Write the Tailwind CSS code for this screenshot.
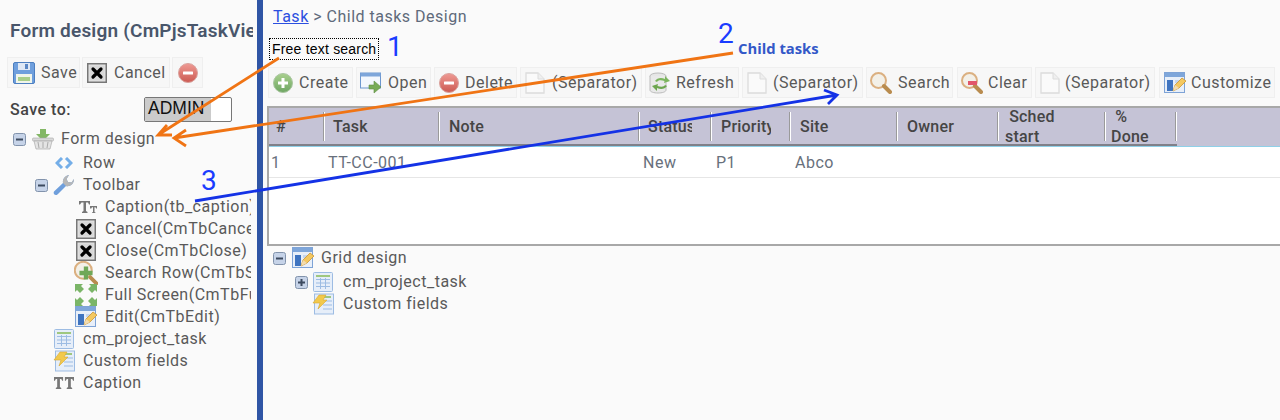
<!DOCTYPE html>
<html lang="en"><head><meta charset="utf-8"><title>Form design</title>
<script src="https://cdn.jsdelivr.net/npm/@tailwindcss/browser@4"></script></head>
<body class="m-0">
<svg width="0" height="0" class="absolute">
<defs>
<linearGradient id="g" x1="0" y1="0" x2="0" y2="1"><stop offset="0" stop-color="#a9d08e"/><stop offset="1" stop-color="#6ea663"/></linearGradient>
<linearGradient id="r" x1="0" y1="0" x2="0" y2="1"><stop offset="0" stop-color="#ef9a94"/><stop offset="1" stop-color="#cc5a52"/></linearGradient>
<symbol id="save" viewBox="0 0 22 22"><rect x="0.5" y="0.5" width="21" height="21" rx="1.5" fill="#6f9fdd" stroke="#4d7fc0"/><rect x="5" y="1" width="12" height="7" fill="#dfe8f5"/><rect x="12" y="2" width="3" height="5" fill="#5b87c4"/><rect x="3" y="12" width="16" height="9" fill="#f1f5ea"/><rect x="5" y="15" width="12" height="4" fill="#a9cf8a"/></symbol>
<symbol id="cancel" viewBox="0 0 20 20"><rect x="0.75" y="0.75" width="18.5" height="18.5" fill="#e4e4e4" stroke="#777" stroke-width="1.5"/><rect x="2.5" y="2.5" width="15" height="15" fill="#d8d8d8"/><path d="M6 6l8 8M14 6l-8 8" stroke="#000" stroke-width="3.2" stroke-linecap="round"/></symbol>
<symbol id="del" viewBox="0 0 20 20"><circle cx="10" cy="10" r="9.5" fill="url(#r)" stroke="#d9a29d"/><rect x="5" y="8.5" width="10" height="3" fill="#fff" rx=".5"/></symbol>
<symbol id="create" viewBox="0 0 20 20"><circle cx="10" cy="10" r="9.5" fill="url(#g)" stroke="#a9c5a0"/><path d="M8.5 5h3v3.5H15v3h-3.500V15h-3v-3.500H5v-3h3.500z" fill="#fff"/></symbol>
<symbol id="open" viewBox="0 0 22 22"><rect x="0.5" y="1" width="20" height="15" fill="#f3f7fd" stroke="#6d97cf"/><rect x="0.5" y="1" width="20" height="3.500" fill="#7ea6da"/><path d="M9 13h5V9l7 6-7 6v-4H9z" fill="#78ab57" stroke="#5f8f45" stroke-width=".6"/></symbol>
<symbol id="page" viewBox="0 0 20 22"><path d="M1 1h12l6 6v14H1z" fill="#fafafa" stroke="#dcdcdc" stroke-width="1.300"/><path d="M13 1v6h6" fill="#efefef" stroke="#dcdcdc"/></symbol>
<symbol id="refresh" viewBox="0 0 22 22"><ellipse cx="9" cy="4" rx="8" ry="3" fill="#e6e6e6" stroke="#bbb"/><path d="M1 4v14c0 2 4 3 8 3s8-1 8-3V4" fill="#e9e9e9" stroke="#bbb"/><path d="M6 9c2-3 6-4 10-2V4l5 5-6 2 .5-2C12 8 9 8 8 10z" fill="#7cb55e"/><path d="M18 14c-2 3-6 4-10 2v3l-5-5 6-2-.5 2c3.500 1 6.500 1 7.500-1z" fill="#6da64f"/></symbol>
<symbol id="search" viewBox="0 0 22 22"><circle cx="8.500" cy="8.500" r="7.500" fill="#f3f0e8" stroke="#dbb081" stroke-width="2"/><path d="M14 14l6 6" stroke="#b98c4f" stroke-width="4" stroke-linecap="round"/></symbol>
<symbol id="clear" viewBox="0 0 22 22"><circle cx="8.500" cy="8.500" r="7.500" fill="#f3f0e8" stroke="#dbb081" stroke-width="2"/><path d="M14 14l6 6" stroke="#b98c4f" stroke-width="4" stroke-linecap="round"/><rect x="7" y="9" width="9" height="4" fill="#e2566a"/></symbol>
<symbol id="searchp" viewBox="0 0 22 22"><circle cx="8.500" cy="8.500" r="7.800" fill="#f3f0e8" stroke="#dbb081" stroke-width="1.800"/><path d="M15 15l5.500 5.500" stroke="#b98c4f" stroke-width="3.500" stroke-linecap="round"/><path d="M9 5h4v4h4v4h-4v4H9v-4H5V9h4z" fill="#6fa858"/></symbol>
<symbol id="custom" viewBox="0 0 22 22"><rect x="0.500" y="0.500" width="20" height="20" fill="#e8eff9" stroke="#7ea3d6"/><rect x="1" y="1" width="19" height="4" fill="#7ea6da"/><rect x="3" y="8" width="6" height="11" fill="#3f74c0"/><rect x="11" y="8" width="7" height="3" fill="#c5d6ee"/><path d="M9 19l2-6 7-7 4 3-7 7z" fill="#f4c860" stroke="#c99634" stroke-width=".8"/><path d="M9 19l2-6 4 3z" fill="#f2dcb0"/></symbol>
<symbol id="table" viewBox="0 0 20 20"><rect x="0.500" y="0.500" width="19" height="19" rx="1" fill="#e6eef9" stroke="#9dbce3"/><rect x="3" y="3" width="14" height="2" fill="#9fc77f"/><path d="M3 7.500h14M3 11h14M3 14.500h14M7.500 6v11M12.500 6v11" stroke="#9dbce3"/></symbol>
<symbol id="fields" viewBox="0 0 22 22"><rect x="2.500" y="1" width="19" height="20" fill="#e6eef9" stroke="#9dbce3"/><rect x="11" y="3" width="8" height="2" fill="#9fc77f"/><path d="M11 8h9M11 12h9M11 16h9" stroke="#9dbce3"/><path d="M7 2h7l-3 5h4l-9 9 2-6H1z" fill="#f2c94c" stroke="#d9a72f" stroke-width=".6"/></symbol>
<symbol id="minus" viewBox="0 0 13 13"><rect x="0.500" y="0.500" width="12" height="12" rx="2" fill="#c6d3e8" stroke="#8293ac"/><rect x="3" y="5.500" width="7" height="2" fill="#3c4a5f"/></symbol>
<symbol id="plus" viewBox="0 0 13 13"><rect x="0.500" y="0.500" width="12" height="12" rx="2" fill="#c6d3e8" stroke="#8293ac"/><path d="M3 5.500h2.500V3h2v2.500H10v2H7.500V10h-2V7.500H3z" fill="#3c4a5f"/></symbol>
<symbol id="basket" viewBox="0 0 22 22"><path d="M8 1h6v5h4l-7 7-7-7h4z" fill="#83b765"/><rect x="0.500" y="10" width="21" height="3" rx="1" fill="#d9d9d9" stroke="#aaa" stroke-width=".6"/><path d="M2 13h18l-2 8H4z" fill="#e4e4e4" stroke="#aaa" stroke-width=".7"/><path d="M6 14l1 6M11 14v6M16 14l-1 6" stroke="#aaa"/></symbol>
<symbol id="row" viewBox="0 0 18 12"><path d="M7 1L2 6l5 5M11 1l5 5-5 5" fill="none" stroke="#74aee8" stroke-width="3"/></symbol>
<symbol id="wrench" viewBox="0 0 22 22"><path d="M3 21c-2 0-3-2-2-3.500L10 9c-.5-3 1-7 6-8l-2.500 4 1.500 3 3.500.5L21 5c0 5-4 8-8 7l-8 8c-.5.500-1 1-2 1z" fill="#6f9fdc"/><path d="M10 9c-.5-3 1-7 6-8l-2.500 4 1.500 3 3.500.5L21 5c0 5-4 8-8 7z" fill="#b7b7b7"/></symbol>
<symbol id="tt" viewBox="0 0 20 14"><path d="M1 1h11v3.500h-1L10 2.500H8V11l1.500 1v1H4v-1l1.500-1V2.500h-2L2 4.500H1z" fill="#777"/><path d="M12 6h7v2.500h-.8L17.500 7.300h-1V12l1 .6v.4h-3.500v-.4l1-.6V7.300h-1l-.7 1.200H12z" fill="#777"/></symbol>
<symbol id="ttb" viewBox="0 0 22 13"><path d="M0 0h10v4H9L8 2H6.500v9l1.500 1v1H2v-1l1.500-1V2H2L1 4H0z" fill="#777"/><path d="M12 0h10v4h-1l-1-2h-1.500v9l1.500 1v1h-6v-1l1.500-1V2H14l-1 2h-1z" fill="#777"/></symbol>
<symbol id="full" viewBox="0 0 22 22"><path d="M0 0h8L6 2l3 3-4 4-3-3-2 2zM22 0v8l-2-2-3 3-4-4 3-3-2-2zM0 22v-8l2 2 3-3 4 4-3 3 2 2zM22 22h-8l2-2-3-3 4-4 3 3 2-2z" fill="#7ab567"/></symbol>
</defs></svg>

<div class="relative flex w-[1280px] h-[420px] overflow-hidden bg-[#fafafa] [font-family:Roboto,sans-serif] text-[16px] tracking-[0.5px] text-[#595959]">

<aside class="w-[257px] shrink-0 pl-[7px] pt-[19px]">
  <h1 class="pl-[3px] h-[24px] w-[246px] overflow-hidden whitespace-nowrap text-[19px] tracking-[0.2px] leading-[24px] font-semibold text-[#49566b]">Form design (CmPjsTaskView)</h1>
  <div class="flex gap-[2px] mt-[14px]">
    <div class="flex items-center h-[31px] w-[73px] pl-[5px] gap-[6px] bg-[#f7f7f7] border border-[#efefef]"><svg class="w-[22px] h-[22px]"><use href="#save"/></svg>Save</div>
    <div class="flex items-center h-[31px] w-[88px] pl-[4px] gap-[7px] bg-[#f7f7f7] border border-[#efefef]"><svg class="w-[20px] h-[20px]"><use href="#cancel"/></svg>Cancel</div>
    <div class="flex items-center h-[31px] w-[31px] pl-[5px] bg-[#f7f7f7] border border-[#efefef]"><svg class="w-[20px] h-[20px]"><use href="#del"/></svg></div>
  </div>
  <div class="flex items-center mt-[9px] pl-[3px] h-[25px]">
    <span class="w-[134px] font-medium text-[#444]">Save to:</span>
    <div class="w-[88px] h-[25px] rounded-[2px] border border-[#777] bg-white overflow-hidden flex"><span class="[font-family:'Liberation_Sans',sans-serif] tracking-normal text-[17.5px] leading-[21px] text-[#111] bg-[#cbcbcb] pl-[3px] pr-0 w-[66px] block">ADMIN</span></div>
  </div>
  <ul class="mt-[5px]">
    <li class="flex items-center h-[24px] mb-px pl-[6px]"><svg class="w-[13px] h-[13px]"><use href="#minus"/></svg><svg class="w-[22px] h-[22px] ml-[6px]"><use href="#basket"/></svg><span class="ml-[7px]">Form design</span></li>
    <li class="flex items-center h-[22px] pl-[48px]"><svg class="w-[18px] h-[12px]"><use href="#row"/></svg><span class="ml-[10px]">Row</span></li>
    <li class="flex items-center h-[22px] pl-[28px]"><svg class="w-[13px] h-[13px]"><use href="#minus"/></svg><svg class="w-[22px] h-[22px] ml-[5px]"><use href="#wrench"/></svg><span class="ml-[8px]">Toolbar</span></li>
    <li class="flex items-center h-[22px] pl-[71px] whitespace-nowrap"><svg class="w-[20px] h-[14px] shrink-0"><use href="#tt"/></svg><span class="ml-[7px] w-[146px] overflow-hidden">Caption(tb_caption)</span></li>
    <li class="flex items-center h-[22px] pl-[68px] whitespace-nowrap"><svg class="w-[20px] h-[20px] shrink-0 ml-[1px]"><use href="#cancel"/></svg><span class="ml-[9px] w-[146px] overflow-hidden">Cancel(CmTbCancel)</span></li>
    <li class="flex items-center h-[22px] pl-[68px] whitespace-nowrap"><svg class="w-[20px] h-[20px] shrink-0 ml-[1px]"><use href="#cancel"/></svg><span class="ml-[9px] w-[146px] overflow-hidden">Close(CmTbClose)</span></li>
    <li class="flex items-center h-[22px] pl-[68px] whitespace-nowrap"><svg class="w-[24px] h-[24px] shrink-0 -ml-[1px]"><use href="#searchp"/></svg><span class="ml-[7px] w-[146px] overflow-hidden">Search Row(CmTbSearch)</span></li>
    <li class="flex items-center h-[22px] pl-[68px] whitespace-nowrap"><svg class="w-[22px] h-[22px] shrink-0"><use href="#full"/></svg><span class="ml-[8px] w-[146px] overflow-hidden">Full Screen(CmTbFull)</span></li>
    <li class="flex items-center h-[22px] pl-[68px] whitespace-nowrap"><svg class="w-[22px] h-[22px] shrink-0"><use href="#custom"/></svg><span class="ml-[8px]">Edit(CmTbEdit)</span></li>
    <li class="flex items-center h-[22px] pl-[47px]"><svg class="w-[20px] h-[20px]"><use href="#table"/></svg><span class="ml-[9px]">cm_project_task</span></li>
    <li class="flex items-center h-[22px] pl-[46px]"><svg class="w-[22px] h-[22px]"><use href="#fields"/></svg><span class="ml-[8px]">Custom fields</span></li>
    <li class="flex items-center h-[22px] pl-[47px]"><svg class="w-[20px] h-[12px]"><use href="#ttb"/></svg><span class="ml-[9px]">Caption</span></li>
  </ul>
</aside>

<div class="w-[6px] shrink-0 bg-[#2f55a5]"></div>

<main class="flex-1 min-w-0 pl-[4px] pt-[7px]">
  <p class="pl-[6px] h-[19px] leading-[19px] text-[#5f6a7b] whitespace-nowrap"><a href="#" class="text-[#2b4fe0] underline">Task</a> &gt; Child tasks Design</p>
  <div class="mt-[12px] ml-[2px] w-[110px] h-[22px] border border-dotted border-black [font-family:'Liberation_Sans',sans-serif] text-[14px] tracking-[0.2px] leading-[20px] text-black pl-[2px] whitespace-nowrap">Free text search</div>
  <div class="flex h-[31px] mt-[7px] ml-[1px] gap-[3px] whitespace-nowrap">
    <div class="flex items-center w-[85px] pl-[4px] gap-[6px] bg-[#f7f7f7] border border-[#efefef]"><svg class="w-[20px] h-[20px]"><use href="#create"/></svg>Create</div>
    <div class="flex items-center w-[75px] pl-[3px] gap-[6px] bg-[#f7f7f7] border border-[#efefef]"><svg class="w-[22px] h-[22px]"><use href="#open"/></svg>Open</div>
    <div class="flex items-center w-[83px] pl-[4px] gap-[6px] bg-[#f7f7f7] border border-[#efefef]"><svg class="w-[20px] h-[20px]"><use href="#del"/></svg>Delete</div>
    <div class="flex items-center w-[122px] pl-[4px] gap-[7px] bg-[#f7f7f7] border border-[#efefef]"><svg class="w-[20px] h-[22px]"><use href="#page"/></svg>(Separator)</div>
    <div class="flex items-center w-[94px] pl-[3px] gap-[5px] bg-[#f7f7f7] border border-[#efefef]"><svg class="w-[22px] h-[22px]"><use href="#refresh"/></svg>Refresh</div>
    <div class="flex items-center w-[121px] pl-[4px] gap-[6px] bg-[#f7f7f7] border border-[#efefef]"><svg class="w-[20px] h-[22px]"><use href="#page"/></svg>(Separator)</div>
    <div class="flex items-center w-[87px] pl-[3px] gap-[6px] bg-[#f7f7f7] border border-[#efefef]"><svg class="w-[22px] h-[22px]"><use href="#search"/></svg>Search</div>
    <div class="flex items-center w-[75px] pl-[3px] gap-[5px] ml-px bg-[#f7f7f7] border border-[#efefef]"><svg class="w-[22px] h-[22px]"><use href="#clear"/></svg>Clear</div>
    <div class="flex items-center w-[120px] pl-[4px] gap-[5px] bg-[#f7f7f7] border border-[#efefef]"><svg class="w-[20px] h-[22px]"><use href="#page"/></svg>(Separator)</div>
    <div class="flex items-center w-[116px] pl-[4px] gap-[5px] ml-px bg-[#f7f7f7] border border-[#efefef]"><svg class="w-[22px] h-[22px]"><use href="#custom"/></svg>Customize</div>
  </div>

  <div class="mt-[8px] h-[140px] border-y-2 border-l-2 border-[#a8a8a8] bg-white">
    <div class="flex h-[39px] bg-[#c5c3d6] text-[16px] tracking-[0.2px] font-medium leading-[20px] text-[#454545] border-b border-[#8fd0e8] whitespace-nowrap">
      <div class="flex border-b-2 border-[#808089] pt-[1px]">
        <div class="w-[56px] flex items-center pl-[7px] relative"><span>#</span><i class="absolute right-0 top-[3px] h-[29px] w-[2px] bg-[#9a9a9a] border-r border-white"></i></div>
        <div class="w-[115px] flex items-center pl-[8px] relative"><span>Task</span><i class="absolute right-0 top-[3px] h-[29px] w-[2px] bg-[#9a9a9a] border-r border-white"></i></div>
        <div class="w-[200px] flex items-center pl-[9px] relative"><span>Note</span><i class="absolute right-0 top-[3px] h-[29px] w-[2px] bg-[#9a9a9a] border-r border-white"></i></div>
        <div class="w-[72px] flex items-center pl-[8px] relative"><span class="w-[44px] overflow-hidden">Status</span><i class="absolute right-0 top-[3px] h-[29px] w-[2px] bg-[#9a9a9a] border-r border-white"></i></div>
        <div class="w-[79px] flex items-center pl-[9px] relative"><span class="w-[50px] overflow-hidden">Priority</span><i class="absolute right-0 top-[3px] h-[29px] w-[2px] bg-[#9a9a9a] border-r border-white"></i></div>
        <div class="w-[107px] flex items-center pl-[9px] relative"><span>Site</span><i class="absolute right-0 top-[3px] h-[29px] w-[2px] bg-[#9a9a9a] border-r border-white"></i></div>
        <div class="w-[101px] flex items-center pl-[9px] relative"><span>Owner</span><i class="absolute right-0 top-[3px] h-[29px] w-[2px] bg-[#9a9a9a] border-r border-white"></i></div>
        <div class="w-[107px] flex items-center pl-[6px] relative"><span>&nbsp;Sched<br>start</span><i class="absolute right-0 top-[3px] h-[29px] w-[2px] bg-[#9a9a9a] border-r border-white"></i></div>
        <div class="w-[71px] flex items-center pl-[5px] relative"><span>&nbsp;%<br>Done</span><i class="absolute right-0 top-[3px] h-[29px] w-[2px] bg-[#9a9a9a] border-r border-white"></i></div>
      </div>
    </div>
    <div class="flex items-center h-[29px] mt-[2px] border-b border-[#e6e6e6] text-[#68707c] whitespace-nowrap">
      <div class="w-[55px] pl-[2px]">1</div>
      <div class="w-[315px] pl-[4px]">TT-CC-001</div>
      <div class="w-[73px] pl-[4px]">New</div>
      <div class="w-[79px] pl-[4px]">P1</div>
      <div class="pl-[4px]">Abco</div>
    </div>
  </div>

  <ul class="whitespace-nowrap">
    <li class="flex items-center h-[24px] pl-[6px]"><svg class="w-[13px] h-[13px]"><use href="#minus"/></svg><svg class="w-[22px] h-[22px] ml-[6px]"><use href="#custom"/></svg><span class="ml-[7px]">Grid design</span></li>
    <li class="flex items-center h-[22px] pl-[28px] mt-[1px]"><svg class="w-[13px] h-[13px]"><use href="#plus"/></svg><svg class="w-[20px] h-[20px] ml-[5px]"><use href="#table"/></svg><span class="ml-[10px]">cm_project_task</span></li>
    <li class="flex items-center h-[22px] pl-[45px]"><svg class="w-[22px] h-[22px]"><use href="#fields"/></svg><span class="ml-[9px]">Custom fields</span></li>
  </ul>
</main>

<svg class="absolute inset-0 pointer-events-none" width="1280" height="420" viewBox="0 0 1280 420" fill="none">
  <path d="M279 58L158 135M167 125L158 135L172 135" stroke="#f07414" stroke-width="2.800"/>
  <path d="M733 53L174 138M186 130L174 138L186 146" stroke="#f07414" stroke-width="2.800"/>
  <path d="M195 201L837 95M824 90L837 95L828 104" stroke="#1432e6" stroke-width="2.800"/>
</svg>
<span class="absolute left-[387px] top-[30px] text-[28px] tracking-normal leading-[34px] text-[#1a3cff]">1</span>
<span class="absolute left-[718px] top-[17px] text-[28px] tracking-normal leading-[34px] text-[#1a3cff]">2</span>
<span class="absolute left-[201px] top-[164px] text-[28px] tracking-normal leading-[34px] text-[#1a3cff]">3</span>
<span class="absolute left-[738px] top-[39px] text-[14.8px] leading-[18px] font-bold tracking-normal text-[#3358c8] [font-family:'Open_Sans',sans-serif]">Child tasks</span>
</div>
</body></html>
